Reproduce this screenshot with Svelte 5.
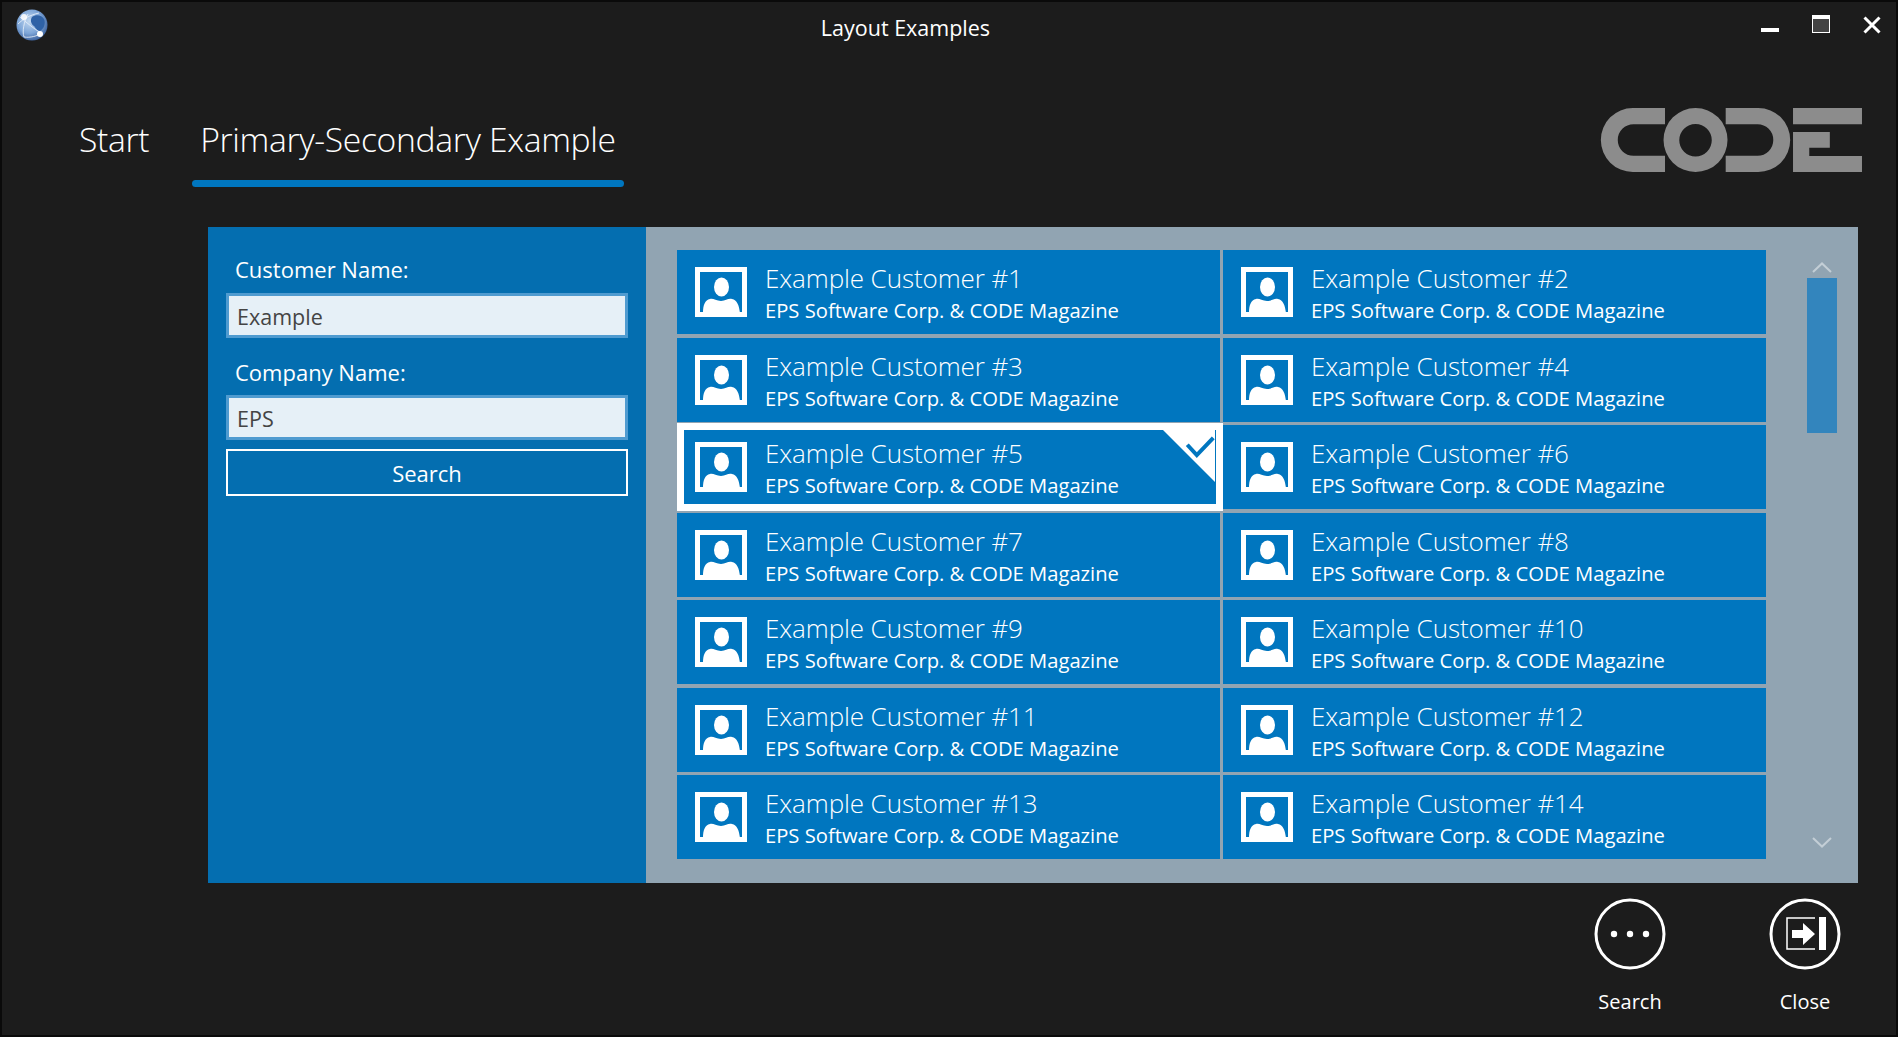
<script>
  const customers = Array.from({ length: 14 }, (_, i) => i + 1);
  let selected = $state(5);
  let customerName = $state('Example');
  let companyName = $state('EPS');
</script>

<div class="window">
  <header class="titlebar">
    <svg class="globe" viewBox="0 0 34 34" aria-hidden="true">
      <defs>
        <radialGradient id="sphere" cx="0.42" cy="0.38" r="0.7">
          <stop offset="0" stop-color="#c2d8f0" />
          <stop offset="0.55" stop-color="#7ea6d8" />
          <stop offset="1" stop-color="#2d528f" />
        </radialGradient>
      </defs>
      <circle cx="17" cy="17" r="15.5" fill="url(#sphere)" />
      <path d="M17 9c4-3 10-2 12 2 2 4 0 10-4 12-3 0-4-3-6-5-3-2-4-6-2-9z" fill="#2f62a6" />
      <path d="M5 9c6 5 14 12 21 16M3 16c5-5 12-9 21-11M9 29c-2-6 0-15 4-23M9 29c6 1 14-1 17-4" fill="none" stroke="#e6eff9" stroke-width="1" opacity="0.85" />
      <circle cx="9" cy="9" r="3" fill="#fff" opacity="0.85" />
      <circle cx="25" cy="26" r="3" fill="#fff" />
    </svg>
    <span class="title">Layout Examples</span>
    <div class="controls">
      <span class="min"></span>
      <span class="max"></span>
      <svg class="close-x" viewBox="0 0 18 18" aria-hidden="true">
        <path d="M1.500 1.500l15 15M16.500 1.500l-15 15" stroke="#fff" stroke-width="3" fill="none" />
      </svg>
    </div>
  </header>

  <nav class="tabs">
    <span class="tab">Start</span>
    <span class="tab active">Primary-Secondary Example</span>
    <svg class="logo" viewBox="182 323 787 193" aria-label="CODE">
      <g fill="#8c8c8c">
        <path d="M375 323H278a96.500 96.500 0 0 0 0 193h97v-49H280a47.500 47.500 0 0 1 0-95h95z" />
        <path fill-rule="evenodd" d="M467 323a96.500 96.500 0 1 0 0 193a96.500 96.500 0 1 0 0-193zM467 371a49 49 0 1 1 0 98a49 49 0 1 1 0-98z" />
        <path d="M558 323h98a96.500 96.500 0 0 1 0 193h-98v-49h96a47.500 47.500 0 0 0 0-95h-96z" />
        <path d="M761 323h208v49H761zM761 395h111v48h-62v25h159v48H761z" />
      </g>
    </svg>
  </nav>

  <main class="panel">
    <aside class="filters">
      <label for="customer">Customer Name:</label>
      <input id="customer" bind:value={customerName} />
      <label for="company" class="second">Company Name:</label>
      <input id="company" bind:value={companyName} />
      <button class="search-btn">Search</button>
    </aside>

    <section class="results">
      <div class="grid">
        {#each customers as n}
          <button class="item" class:selected={selected === n} onclick={() => (selected = n)}>
            <svg class="avatar" viewBox="0 0 52 50" aria-hidden="true">
              <path fill="#fff" fill-rule="evenodd" d="M0 0h52v50H0zM5 5v40h42V5z" />
              <ellipse cx="26.500" cy="20" rx="7.500" ry="9.500" fill="#fff" />
              <path fill="#fff" d="M8 46c0-8 2-13 7-14 3-1 6 2 11 2 5 0 7-3 11-2 5 1 7 6 8 14z" />
            </svg>
            <span class="text">
              <span class="name">Example Customer #{n}</span>
              <span class="company">EPS Software Corp. &amp; CODE Magazine</span>
            </span>
            {#if selected === n}
              <svg class="tick" viewBox="0 0 60 60" aria-hidden="true">
                <path d="M0 0h60v60z" fill="#fff" />
                <path d="M28 17l11 12L58 9" fill="none" stroke="#0076bf" stroke-width="4.600" />
              </svg>
            {/if}
          </button>
        {/each}
      </div>
      <div class="scrollbar">
        <svg class="chevron" viewBox="0 0 20 11" aria-hidden="true">
          <path d="M1 10l9-8.500 9 8.500" fill="none" stroke="#c3ced6" stroke-width="2" />
        </svg>
        <div class="thumb"></div>
        <svg class="chevron down" viewBox="0 0 20 11" aria-hidden="true">
          <path d="M1 1l9 8.500 9-8.500" fill="none" stroke="#c3ced6" stroke-width="2" />
        </svg>
      </div>
    </section>
  </main>

  <footer class="actions">
    <div class="action">
      <svg viewBox="0 0 72 72" aria-hidden="true">
        <circle cx="36" cy="36" r="34" fill="none" stroke="#fff" stroke-width="3" />
        <circle cx="20" cy="36" r="3.200" fill="#fff" />
        <circle cx="36" cy="36" r="3.200" fill="#fff" />
        <circle cx="52" cy="36" r="3.200" fill="#fff" />
      </svg>
      <span>Search</span>
    </div>
    <div class="action">
      <svg viewBox="0 0 72 72" aria-hidden="true">
        <circle cx="36" cy="36" r="34" fill="none" stroke="#fff" stroke-width="3" />
        <path d="M46 20H18v31h28" fill="none" stroke="#fff" stroke-width="1.500" />
        <path fill="#fff" d="M50 19h7v33h-7zM23 32h11v-7l12 11-12 11v-7H23z" />
      </svg>
      <span>Close</span>
    </div>
  </footer>
</div>

<style>
  :global(body) {
    margin: 0;
    background: #1c1c1c;
  }

  .window {
    width: 1898px;
    height: 1037px;
    box-sizing: border-box;
    border: 2px solid #0a0a0a;
    background: #1c1c1c;
    color: #fff;
    font-family: "Open Sans", "Noto Sans", sans-serif;
    display: flex;
    flex-direction: column;
    overflow: hidden;
  }

  .titlebar {
    height: 50px;
    flex: none;
    position: relative;
    display: flex;
    justify-content: center;
    align-items: flex-start;
  }

  .globe {
    position: absolute;
    left: 13px;
    top: 6px;
    width: 34px;
    height: 34px;
  }

  .title {
    font-size: 21.500px;
    line-height: 28px;
    margin-top: 12px;
    margin-right: 87px;
  }

  .controls {
    position: absolute;
    right: 15px;
    top: 13px;
    display: flex;
    align-items: flex-start;
    gap: 33px;
  }

  .min {
    width: 18px;
    height: 4px;
    background: #fff;
    margin-top: 13px;
  }

  .max {
    width: 18px;
    height: 18px;
    box-sizing: border-box;
    border: 1px solid #fff;
    border-top-width: 4px;
    background: #444;
  }

  .close-x {
    width: 18px;
    height: 18px;
    margin-top: 1px;
  }

  .tabs {
    height: 175px;
    flex: none;
    padding-left: 69px;
    display: flex;
    align-items: flex-start;
    position: relative;
  }

  .tab {
    font-size: 33.700px;
    font-weight: 300;
    line-height: 44px;
    margin-top: 65px;
    padding: 0 8px 30px;
    position: relative;
    letter-spacing: -0.35px;
    white-space: nowrap;
  }

  .tab.active {
    margin-left: 35px;
  }

  .tab.active::after {
    content: "";
    position: absolute;
    left: 0;
    right: 0;
    bottom: 4px;
    height: 7px;
    border-radius: 4px;
    background: #0076bf;
  }

  .logo {
    position: absolute;
    left: 1598px;
    top: 56px;
    width: 263px;
    height: 64px;
  }

  .panel {
    width: 1650px;
    height: 656px;
    flex: none;
    margin-left: 206px;
    display: flex;
    background: #91a4b2;
  }

  .filters {
    width: 438px;
    flex: none;
    box-sizing: border-box;
    background: #046eb0;
    padding: 28px 18px 0;
    display: flex;
    flex-direction: column;
  }

  label {
    font-size: 22px;
    line-height: 28px;
    padding-left: 9px;
    margin-bottom: 10px;
  }

  label.second {
    margin-top: 20px;
    margin-bottom: 9px;
  }

  input {
    height: 45px;
    box-sizing: border-box;
    border: 3px solid #4f9bd0;
    background: #e6f0f7;
    color: #444;
    font: inherit;
    font-size: 21.500px;
    padding: 2px 8px 0;
    outline: none;
  }

  .search-btn {
    height: 47px;
    margin-top: 9px;
    border: 2px solid #fff;
    background: transparent;
    color: #fff;
    font: inherit;
    font-size: 22px;
  }

  .results {
    flex: 1;
    display: flex;
    padding: 23px 0 0 31px;
  }

  .grid {
    width: 1089px;
    display: grid;
    grid-template-columns: 1fr 1fr;
    grid-auto-rows: 84px;
    gap: 3.500px 3px;
    align-content: start;
  }

  .item {
    position: relative;
    box-sizing: border-box;
    border: none;
    margin: 0;
    padding: 0 0 0 18px;
    background: #0076bf;
    color: #fff;
    font: inherit;
    text-align: left;
    display: flex;
    align-items: center;
    gap: 18px;
  }

  .item.selected {
    z-index: 1;
  }

  .item.selected::after {
    content: "";
    position: absolute;
    inset: -2px -2.5px -2px 0;
    border: 7px solid #fff;
    pointer-events: none;
  }

  .avatar {
    width: 52px;
    height: 50px;
    flex: none;
  }

  .text {
    display: flex;
    flex-direction: column;
    padding-top: 2px;
  }

  .name {
    font-size: 26px;
    font-weight: 300;
    line-height: 32px;
    letter-spacing: -0.1px;
    white-space: nowrap;
  }

  .company {
    font-size: 20.200px;
    line-height: 28px;
    margin-top: 2px;
    white-space: nowrap;
  }

  .tick {
    position: absolute;
    z-index: 1;
    right: 5px;
    top: 5px;
    width: 52px;
    height: 52px;
  }

  .scrollbar {
    margin-left: 41px;
    width: 30px;
    height: 586px;
    margin-top: 12px;
    display: flex;
    flex-direction: column;
    align-items: center;
  }

  .chevron {
    width: 20px;
    height: 11px;
    flex: none;
  }

  .thumb {
    width: 30px;
    height: 155px;
    margin-top: 5px;
    background: #3385bd;
  }

  .chevron.down {
    margin-top: auto;
  }

  .actions {
    flex: 1;
    display: flex;
    justify-content: flex-end;
    padding-right: 47px;
    gap: 87px;
  }

  .action {
    width: 88px;
    display: flex;
    flex-direction: column;
    align-items: center;
    padding-top: 15px;
  }

  .action svg {
    width: 72px;
    height: 72px;
  }

  .action span {
    font-size: 20px;
    line-height: 28px;
    margin-top: 18px;
  }
</style>
